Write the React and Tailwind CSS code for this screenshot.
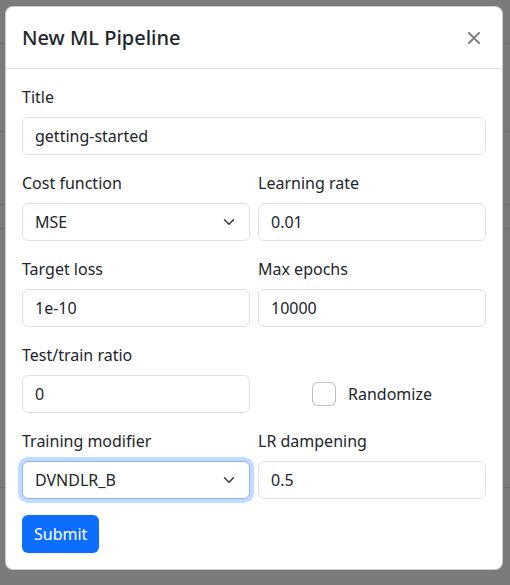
import React from "react";

const Chevron = () => (
  <svg
    width="16"
    height="12"
    viewBox="0 0 16 16"
    className="absolute right-3 top-1/2 -translate-y-1/2"
    fill="none"
  >
    <path
      d="m2 5 6 6 6-6"
      stroke="#343a40"
      strokeWidth="2"
      strokeLinecap="round"
      strokeLinejoin="round"
    />
  </svg>
);

function Field({ label, children }) {
  return (
    <div className="flex flex-col">
      <label className="mb-2 text-base leading-6 text-[#212529]">{label}</label>
      {children}
    </div>
  );
}

function TextInput({ value }) {
  return (
    <div className="flex h-[38px] items-center rounded-md border border-[#dee2e6] bg-white px-3 text-base text-[#212529]">
      {value}
    </div>
  );
}

function Select({ value, focused = false }) {
  return (
    <div
      className={`relative flex h-[38px] items-center rounded-md border bg-white pl-3 pr-9 text-base text-[#212529] ${
        focused
          ? "border-[#86b7fe] shadow-[0_0_0_4px_rgba(13,110,253,0.25)]"
          : "border-[#dee2e6]"
      }`}
    >
      {value}
      <Chevron />
    </div>
  );
}

export default function App() {
  return (
    <div
      className="relative h-[585px] w-full overflow-hidden bg-[#7b7b7b]"
      style={{ fontFamily: '"Noto Sans", "Open Sans", sans-serif' }}
    >
      {/* page behind the backdrop */}
      <div className="flex flex-col">
        <div className="h-[44px] border-b border-[#707070]" />
        <div className="h-[88px] border-b border-[#707070]" />
        <div className="h-[73px] border-b border-[#707070]" />
        <div className="h-[24px] border-b border-[#707070]" />
        <div className="h-[259px] border-b border-[#707070]" />
      </div>

      {/* modal */}
      <div className="absolute left-[5px] top-[6px] w-[498px] rounded-lg border border-black/20 bg-white">
        <div className="flex h-[62px] items-center justify-between border-b border-[#dee2e6] px-4">
          <h5 className="text-xl font-medium leading-[30px] text-[#212529]">
            New ML Pipeline
          </h5>
          <button className="flex h-6 w-6 items-center justify-center">
            <svg width="12" height="12" viewBox="0 0 12 12">
              <path
                d="M1 1 11 11M11 1 1 11"
                stroke="#808080"
                strokeWidth="2"
                strokeLinecap="round"
              />
            </svg>
          </button>
        </div>

        <div className="flex flex-col gap-4 p-4">
          <Field label="Title">
            <TextInput value="getting-started" />
          </Field>

          <div className="grid grid-cols-2 gap-2">
            <Field label="Cost function">
              <Select value="MSE" />
            </Field>
            <Field label="Learning rate">
              <TextInput value="0.01" />
            </Field>
          </div>

          <div className="grid grid-cols-2 gap-2">
            <Field label="Target loss">
              <TextInput value="1e-10" />
            </Field>
            <Field label="Max epochs">
              <TextInput value="10000" />
            </Field>
          </div>

          <div className="grid grid-cols-2 gap-2">
            <Field label="Test/train ratio">
              <TextInput value="0" />
            </Field>
            <div className="flex items-end justify-center">
              <div className="flex h-[38px] items-center gap-3">
                <span className="h-6 w-6 rounded-md border border-black/25 bg-white" />
                <span className="text-base text-[#212529]">Randomize</span>
              </div>
            </div>
          </div>

          <div className="grid grid-cols-2 gap-2">
            <Field label="Training modifier">
              <Select value="DVNDLR_B" focused />
            </Field>
            <Field label="LR dampening">
              <TextInput value="0.5" />
            </Field>
          </div>

          <div>
            <button className="h-[38px] rounded-md bg-[#0d6efd] px-3 text-base text-white">
              Submit
            </button>
          </div>
        </div>
      </div>
    </div>
  );
}
